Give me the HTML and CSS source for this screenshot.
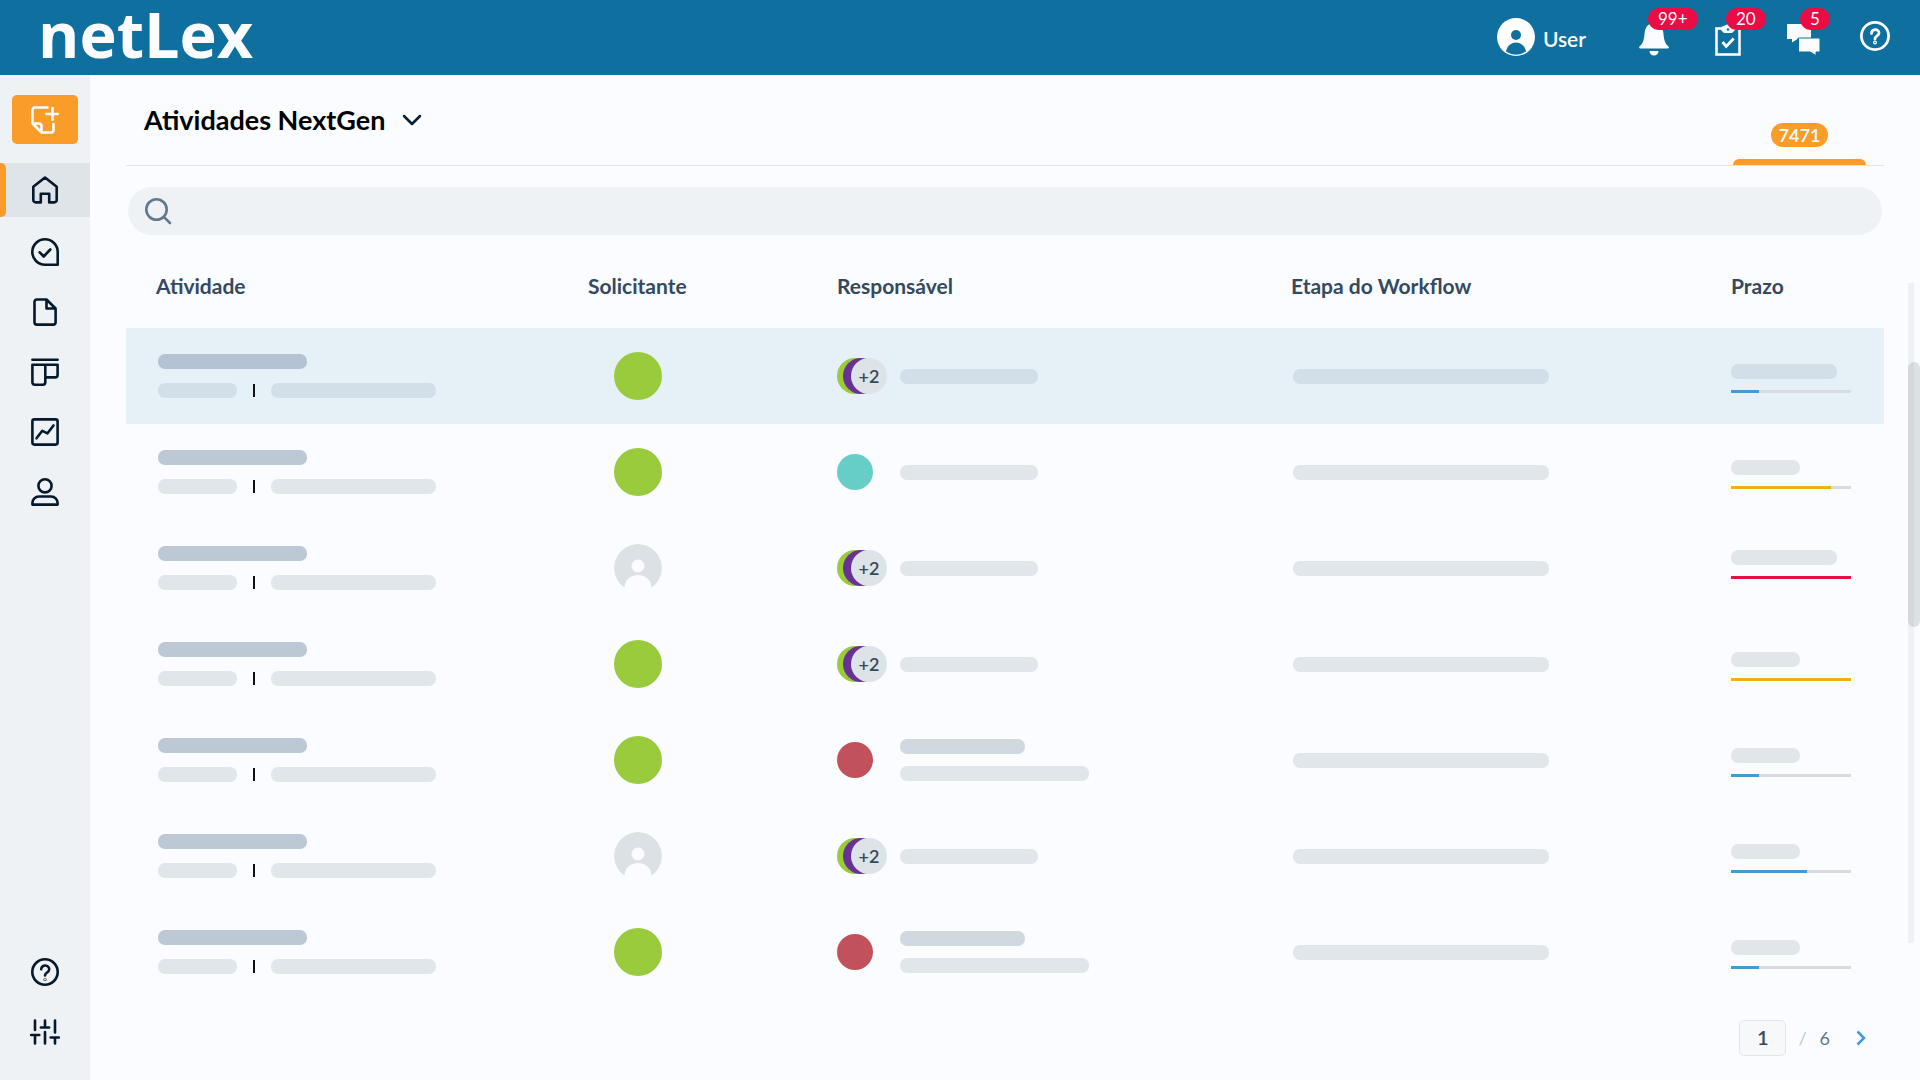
FILE: index.html
```html
<!DOCTYPE html>
<html lang="pt-BR">
<head>
<meta charset="utf-8">
<meta name="viewport" content="width=device-width, initial-scale=1">
<title>netLex</title>
<link rel="stylesheet" href="styles.css">
</head>
<body>
<svg class="defs" aria-hidden="true">
  <symbol id="empty-avatar" viewBox="0 0 48 48">
    <path fill="#dce1e5" fill-rule="evenodd" d="M24 0a24 24 0 0 1 13.500 43.800C37.500 36 31.500 31 24 31S10.500 36 10.500 43.800A24 24 0 0 1 24 0ZM24 15.500a6.500 6.500 0 1 0 0 13 6.500 6.500 0 0 0 0-13Z"/>
  </symbol>
</svg>

<header class="topbar">
  <a class="logo" href="#">netLex</a>
  <div class="topbar-actions">
    <button class="user" type="button">
      <svg width="38" height="38" viewBox="0 0 38 38" aria-hidden="true"><circle cx="19" cy="19" r="19" fill="#fff"/><circle cx="19" cy="17" r="5" fill="#0f6f9f"/><path d="M9 33.500c1-5.500 5-9 10-9s9 3.500 10 9a17.500 17.500 0 0 1-20 0Z" fill="#0f6f9f"/></svg>
      <span>User</span>
    </button>
    <button class="action" type="button" aria-label="Notificações">
      <svg width="32" height="40" viewBox="0 0 32 40" fill="#fafcff" aria-hidden="true"><path d="M16 6c-6.500 0-9 5-9.500 11-.5 7-2 10-5 12.500-.7.600-.3 2 .8 2h27.400c1.100 0 1.500-1.400.8-2-3-2.500-4.500-5.500-5-12.500C25 11 22.500 6 16 6ZM11.500 34h9c0 2.800-2 4.500-4.500 4.500s-4.500-1.700-4.500-4.500Z"/></svg>
      <span class="badge badge-bell">99+</span>
    </button>
    <button class="action" type="button" aria-label="Tarefas">
      <svg width="32" height="40" viewBox="0 0 32 40" aria-hidden="true"><rect x="4.500" y="11.500" width="23" height="26" fill="none" stroke="#fafcff" stroke-width="2.600"/><path d="M9 10l4-1.500c1-1.500 5-1.500 6 0l4 1.500v3l-3 3h-8l-3-3Z" fill="#fafcff"/><circle cx="16" cy="12.500" r="1.200" fill="#0f6f9f"/><path d="M10.500 25l3.700 4.500 7.500-8" fill="none" stroke="#fafcff" stroke-width="2.800"/></svg>
      <span class="badge">20</span>
    </button>
    <button class="action" type="button" aria-label="Mensagens">
      <svg width="34" height="40" viewBox="0 0 34 40" fill="#fafcff" aria-hidden="true"><path d="M1 7h24v14h-13.500v1L6 25.500V22H1Z"/><path d="M12.500 21H34v14h-4v3.500L24 35H12.500Z" stroke="#0f6f9f"/></svg>
      <span class="badge">5</span>
    </button>
    <button class="action" type="button" aria-label="Ajuda">
      <svg width="30" height="40" viewBox="0 0 30 40" fill="none" stroke="#fafcff" stroke-width="2.800" stroke-linecap="round" aria-hidden="true"><circle cx="15" cy="19" r="13.600"/><path d="M11.500 16.500c0-5 7.500-5 7.500-.5 0 3-4 2.800-4 6"/><circle cx="15" cy="25.500" r=".6"/></svg>
    </button>
  </div>
</header>

<div class="shell">
  <aside class="sidebar">
    <button class="create" type="button" aria-label="Nova atividade">
      <svg width="28" height="28" viewBox="0 0 28 28" fill="none" stroke="#fafcff" stroke-width="2.600" stroke-linecap="round" stroke-linejoin="round" aria-hidden="true"><path d="M16.500 1.500H4A2.500 2.500 0 0 0 1.500 4v13.500l9 9h9.500a2.500 2.500 0 0 0 2.500-2.500v-6M1.500 17.500H8a2.500 2.500 0 0 1 2.500 2.500v6.500M21.500 2v12M15.500 8h11.200"/></svg>
    </button>
    <nav class="nav" aria-label="Principal">
      <a class="nav-home" href="#" aria-label="Início" aria-current="page">
        <svg class="icon" viewBox="0 0 28 28" aria-hidden="true"><path d="M14 1.500L2.300 10.800V24A2.400 2.400 0 0 0 4.700 26.400H9.800V17.700H18.200V26.400H23.300A2.400 2.400 0 0 0 25.700 24V10.800Z"/></svg>
      </a>
      <div class="nav-list">
        <a class="nav-link" href="#" aria-label="Tarefas"><svg class="icon" viewBox="0 0 28 28" aria-hidden="true"><path d="M14 1.300A12.700 12.700 0 0 0 14 26.700H26.700V14A12.700 12.700 0 0 0 14 1.300ZM8.700 14.300l4 4.200 6.600-7"/></svg></a>
        <a class="nav-link" href="#" aria-label="Documentos"><svg class="icon" viewBox="0 0 28 28" aria-hidden="true"><path d="M15.500 1.500H5.900A2.400 2.400 0 0 0 3.500 3.900V24.200a2.400 2.400 0 0 0 2.400 2.400H22.200A2.400 2.400 0 0 0 24.600 24.200V10.500ZM15.500 1.500V10.500H24.600"/></svg></a>
        <a class="nav-link" href="#" aria-label="Quadro"><svg class="icon" viewBox="0 0 28 28" aria-hidden="true"><path d="M1.400 1.800H26.600M1.400 6.700H26.600V17a2.400 2.400 0 0 1-2.400 2.400H14.300M14.300 6.700V24.300a2.400 2.400 0 0 1-2.400 2.400H3.800A2.400 2.400 0 0 1 1.400 24.300V6.700"/></svg></a>
        <a class="nav-link" href="#" aria-label="Relatórios"><svg class="icon" viewBox="0 0 28 28" aria-hidden="true"><rect x="1.400" y="1.400" width="25.200" height="25.200" rx="2"/><path d="M5.500 20.300L11.300 12.800L16.500 15.300L22.500 7.500"/></svg></a>
        <a class="nav-link" href="#" aria-label="Perfil"><svg class="icon" viewBox="0 0 28 28" aria-hidden="true"><circle cx="14" cy="7.800" r="6.600"/><path d="M1.400 26.600V25A6.500 6.500 0 0 1 7.900 18.500H20.100A6.500 6.500 0 0 1 26.600 25V26.600Z"/></svg></a>
      </div>
      <div class="nav-footer">
        <a class="nav-link" href="#" aria-label="Ajuda"><svg class="icon" viewBox="0 0 28 28" aria-hidden="true"><circle cx="14" cy="14" r="12.700"/><path d="M10.200 11.300c.2-5.300 8.300-4.800 8 .2-.2 3-4.200 3-4.200 6"/><circle cx="14" cy="21.500" r=".3"/></svg></a>
        <a class="nav-link" href="#" aria-label="Configurações"><svg class="icon" viewBox="0 0 28 28" aria-hidden="true"><path d="M4 2.500V12M4 17V25.500M.2 17H8.300M14 2.500V9.500M9.900 9.500H18.100M14 14V25.500M24 2.500V14.500M24 19.500V25.500M19.700 19.500H27.800"/></svg></a>
      </div>
    </nav>
  </aside>

  <main class="main">
    <div class="page-head">
      <h1 class="page-title">
        <button class="title-button" type="button">Atividades NextGen
          <svg width="20" height="12" viewBox="0 0 20 12" fill="none" stroke="#04203a" stroke-width="2.500" stroke-linecap="round" stroke-linejoin="round" aria-hidden="true"><path d="M2 2l8 8 8-8"/></svg>
        </button>
      </h1>
      <a class="tab" href="#"><span class="tab-count">7471</span></a>
    </div>

    <label class="search">
      <svg width="28" height="28" viewBox="0 0 28 28" fill="none" stroke="#61788f" stroke-width="2.600" stroke-linecap="round" aria-hidden="true"><circle cx="12.500" cy="12.500" r="10.200"/><path d="M19.800 19.800L26 26"/></svg>
      <input class="search-input" type="search" aria-label="Pesquisar">
    </label>

    <div class="list">
      <table class="table">
        <colgroup><col class="col-activity"><col class="col-requester"><col class="col-owner"><col class="col-stage"><col class="col-due"></colgroup>
        <thead>
          <tr><th scope="col">Atividade</th><th scope="col">Solicitante</th><th scope="col">Responsável</th><th scope="col">Etapa do Workflow</th><th scope="col">Prazo</th></tr>
        </thead>
        <tbody>
          <tr class="selected">
            <td><div class="activity"><span class="bar bar-title"></span><div class="meta"><span class="bar bar-code"></span><span class="sep"></span><span class="bar bar-text"></span></div></div></td>
            <td><span class="avatar avatar-green"></span></td>
            <td><div class="owner"><div class="stack"><span class="dot dot-green"></span><span class="dot dot-purple"></span><span class="dot dot-more">+2</span></div><span class="bar bar-owner"></span></div></td>
            <td><span class="bar bar-stage"></span></td>
            <td><div class="due"><span class="bar bar-long"></span><div class="track"><div class="fill fill-blue" style="width:23%"></div></div></div></td>
          </tr>
          <tr>
            <td><div class="activity"><span class="bar bar-title"></span><div class="meta"><span class="bar bar-code"></span><span class="sep"></span><span class="bar bar-text"></span></div></div></td>
            <td><span class="avatar avatar-green"></span></td>
            <td><div class="owner"><div class="stack"><span class="dot dot-teal"></span></div><span class="bar bar-owner"></span></div></td>
            <td><span class="bar bar-stage"></span></td>
            <td><div class="due"><span class="bar bar-short"></span><div class="track"><div class="fill fill-yellow" style="width:83%"></div></div></div></td>
          </tr>
          <tr>
            <td><div class="activity"><span class="bar bar-title"></span><div class="meta"><span class="bar bar-code"></span><span class="sep"></span><span class="bar bar-text"></span></div></div></td>
            <td><svg class="avatar" aria-hidden="true"><use href="#empty-avatar"/></svg></td>
            <td><div class="owner"><div class="stack"><span class="dot dot-green"></span><span class="dot dot-purple"></span><span class="dot dot-more">+2</span></div><span class="bar bar-owner"></span></div></td>
            <td><span class="bar bar-stage"></span></td>
            <td><div class="due due-late"><span class="bar bar-long"></span><div class="track"><div class="fill fill-red" style="width:100%"></div></div></div></td>
          </tr>
          <tr>
            <td><div class="activity"><span class="bar bar-title"></span><div class="meta"><span class="bar bar-code"></span><span class="sep"></span><span class="bar bar-text"></span></div></div></td>
            <td><span class="avatar avatar-green"></span></td>
            <td><div class="owner"><div class="stack"><span class="dot dot-green"></span><span class="dot dot-purple"></span><span class="dot dot-more">+2</span></div><span class="bar bar-owner"></span></div></td>
            <td><span class="bar bar-stage"></span></td>
            <td><div class="due"><span class="bar bar-short"></span><div class="track"><div class="fill fill-yellow" style="width:100%"></div></div></div></td>
          </tr>
          <tr>
            <td><div class="activity"><span class="bar bar-title"></span><div class="meta"><span class="bar bar-code"></span><span class="sep"></span><span class="bar bar-text"></span></div></div></td>
            <td><span class="avatar avatar-green"></span></td>
            <td><div class="owner"><div class="stack"><span class="dot dot-red"></span></div><div class="owner-lines"><span class="bar bar-name"></span><span class="bar bar-team"></span></div></div></td>
            <td><span class="bar bar-stage"></span></td>
            <td><div class="due"><span class="bar bar-short"></span><div class="track"><div class="fill fill-blue" style="width:23%"></div></div></div></td>
          </tr>
          <tr>
            <td><div class="activity"><span class="bar bar-title"></span><div class="meta"><span class="bar bar-code"></span><span class="sep"></span><span class="bar bar-text"></span></div></div></td>
            <td><svg class="avatar" aria-hidden="true"><use href="#empty-avatar"/></svg></td>
            <td><div class="owner"><div class="stack"><span class="dot dot-green"></span><span class="dot dot-purple"></span><span class="dot dot-more">+2</span></div><span class="bar bar-owner"></span></div></td>
            <td><span class="bar bar-stage"></span></td>
            <td><div class="due"><span class="bar bar-short"></span><div class="track"><div class="fill fill-blue" style="width:63%"></div></div></div></td>
          </tr>
          <tr>
            <td><div class="activity"><span class="bar bar-title"></span><div class="meta"><span class="bar bar-code"></span><span class="sep"></span><span class="bar bar-text"></span></div></div></td>
            <td><span class="avatar avatar-green"></span></td>
            <td><div class="owner"><div class="stack"><span class="dot dot-red"></span></div><div class="owner-lines"><span class="bar bar-name"></span><span class="bar bar-team"></span></div></div></td>
            <td><span class="bar bar-stage"></span></td>
            <td><div class="due"><span class="bar bar-short"></span><div class="track"><div class="fill fill-blue" style="width:23%"></div></div></div></td>
          </tr>
        </tbody>
      </table>
      <div class="scroll"><div class="scroll-thumb"></div></div>
    </div>

    <nav class="pager" aria-label="Paginação">
      <input class="pager-input" type="text" value="1" aria-label="Página">
      <span class="pager-slash">/</span>
      <span class="pager-total">6</span>
      <button class="pager-next" type="button" aria-label="Próxima página"><svg width="10" height="16" viewBox="0 0 10 16" fill="none" stroke="#4499d4" stroke-width="2.500" aria-hidden="true"><path d="M1.500 1.500L8 8l-6.500 6.500"/></svg></button>
    </nav>
  </main>
</div>
</body>
</html>
```
FILE: styles.css
```css
* { box-sizing: border-box; }

body {
  margin: 0;
  min-height: 100vh;
  display: flex;
  flex-direction: column;
  background: #fafcff;
  color: #34495e;
  font-family: Lato, "Open Sans", sans-serif;
}

button {
  padding: 0;
  border: 0;
  background: none;
  color: inherit;
  font: inherit;
  cursor: pointer;
}

svg { display: block; }

.defs { position: absolute; width: 0; height: 0; }

/* Top bar */
.topbar {
  display: flex;
  justify-content: space-between;
  height: 75px;
  padding: 0 30px 0 38px;
  background: #0f6f9f;
  color: #fafcff;
}

.logo {
  color: #fafcff;
  font-family: "Open Sans", Lato, sans-serif;
  font-size: 63px;
  font-weight: 700;
  line-height: 68px;
  text-decoration: none;
}

.topbar-actions {
  display: flex;
  gap: 42px;
  height: 74px;
}

.user {
  display: flex;
  align-items: center;
  gap: 8px;
  margin-right: 10px;
  font-size: 21px;
  font-weight: 600;
}

.user span { padding-top: 3px; }

.action {
  position: relative;
  display: flex;
  align-items: center;
  width: 32px;
}

.action:last-child { width: 30px; }
.action svg { flex: none; }

.badge {
  position: absolute;
  top: 8px;
  left: 14px;
  min-width: 30px;
  height: 22px;
  padding: 0 10px;
  border-radius: 11px;
  background: #eb0b45;
  font-size: 17px;
  line-height: 22px;
}

.badge-bell { left: 10px; }

/* Sidebar */
.shell { display: flex; flex: 1; }

.sidebar {
  display: flex;
  flex-direction: column;
  flex: none;
  width: 90px;
  padding: 20px 0 18px;
  background: #eef2f5;
}

.create {
  display: grid;
  place-items: center;
  height: 49px;
  margin: 0 12px 19px;
  border-radius: 5px;
  background: #f99d28;
}

.nav {
  display: flex;
  flex-direction: column;
  flex: 1;
}

.nav-home {
  position: relative;
  display: grid;
  place-items: center;
  height: 54px;
  background: #dfe4e8;
}

.nav-home::before {
  content: "";
  position: absolute;
  inset: 0 auto 0 0;
  width: 6px;
  border-radius: 0 5px 5px 0;
  background: #f99d28;
}

.nav-list { margin-top: 5px; }
.nav-footer { margin-top: auto; }

.nav-link {
  display: grid;
  place-items: center;
  height: 60px;
}

.icon {
  width: 28px;
  height: 28px;
  overflow: visible;
  fill: none;
  stroke: #04192b;
  stroke-width: 2.6px;
  stroke-linecap: round;
  stroke-linejoin: round;
}

/* Main area */
.main {
  flex: 1;
  min-width: 0;
  padding-left: 36px;
}

.page-head {
  display: flex;
  justify-content: space-between;
  align-items: flex-start;
  height: 91px;
  margin-right: 36px;
  border-bottom: 1px solid #dfe4e8;
}

.page-title { margin: 0; font-size: 27px; line-height: 32px; }

.title-button {
  display: flex;
  align-items: center;
  gap: 17px;
  margin: 29px 0 0 18px;
  color: #000;
  font-weight: 700;
}

.tab {
  display: flex;
  justify-content: center;
  align-items: flex-end;
  align-self: stretch;
  position: relative;
  width: 133px;
  margin-right: 18px;
  padding-bottom: 18px;
  text-decoration: none;
}

.tab::after {
  content: "";
  position: absolute;
  inset: auto 0 0 0;
  height: 6px;
  border-radius: 6px 6px 0 0;
  background: #f99d28;
}

.tab-count {
  padding: 0 8px;
  border-radius: 12px;
  background: #f99d28;
  color: #fafcff;
  font-size: 18px;
  font-weight: 600;
  line-height: 24px;
}

.search {
  display: flex;
  align-items: center;
  gap: 12px;
  height: 48px;
  margin: 21px 38px 11px 2px;
  padding: 0 16px;
  border-radius: 24px;
  background: #eef2f5;
}

.search-input {
  flex: 1;
  border: 0;
  outline: 0;
  background: none;
  color: inherit;
  font: inherit;
  font-size: 18px;
}

/* Table */
.list { display: flex; gap: 24px; }

.table {
  flex: 1;
  width: 100%;
  border-collapse: collapse;
  table-layout: fixed;
}

.col-activity { width: 432px; }
.col-requester { width: 249px; }
.col-owner { width: 454px; }
.col-stage { width: 440px; }
.col-due { width: 183px; }

.table th {
  height: 82px;
  padding: 0 0 3px 30px;
  font-size: 21px;
  font-weight: 700;
  text-align: left;
}

.table td { height: 96px; padding: 0 0 0 30px; }
.table td:nth-child(1), .table td:nth-child(4) { padding-left: 32px; }
.table td:nth-child(2) { padding-left: 56px; }
.selected { background: #e5f1f7; }

.bar {
  display: block;
  flex: none;
  height: 15px;
  border-radius: 7px;
  background: #e0e6ea;
}

.selected .bar { background: #d3dfe8; }
.bar-title { width: 149px; background: #bcc8d4; }
.selected .bar-title { background: #b3c3d3; }
.bar-code { width: 79px; }
.bar-text { width: 165px; }
.bar-owner { width: 138px; }
.bar-name { width: 125px; background: #d0d8e0; }
.bar-team { width: 189px; }
.bar-stage { width: 256px; }
.bar-long { width: 106px; }
.bar-short { width: 69px; }

.activity { display: grid; gap: 14px; }
.meta { display: flex; align-items: center; gap: 16px; }
.sep { width: 2px; height: 13px; background: #111; }

.avatar {
  display: block;
  width: 48px;
  height: 48px;
  border-radius: 50%;
}

.avatar-green { background: #99cb3d; }

.owner { display: flex; align-items: center; }
.owner-lines { display: grid; gap: 12px; }

.stack { display: flex; flex: none; width: 63px; }

.dot {
  flex: none;
  width: 36px;
  height: 36px;
  border-radius: 50%;
}

.dot-green { background: #99cb3d; }
.dot-purple { margin-left: -30px; background: #683295; }
.dot-more {
  margin-left: -28px;
  background: #dee3e8;
  font-size: 18px;
  font-weight: 600;
  line-height: 36px;
  text-align: center;
}
.dot-teal { background: #67cec7; }
.dot-red { background: #c1515b; }

.due { display: grid; gap: 11px; padding-top: 4px; }
.due-late { padding: 0 0 7px; }
.track { width: 120px; height: 3px; background: #d9dcde; }
.fill { height: 100%; }
.fill-blue { background: #4499d4; }
.fill-yellow { background: #f0b010; }
.fill-red { background: #eb0b45; }

.scroll {
  flex: none;
  width: 12px;
  margin: 37px 0 57px;
  padding-top: 79px;
  background: linear-gradient(#eef2f5, #eef2f5) left / 6px 100% no-repeat;
}

.scroll-thumb {
  height: 265px;
  border-radius: 6px;
  background: linear-gradient(90deg, #d3d8dd 50%, #dce1e5 50%);
}

/* Pagination */
.pager {
  display: flex;
  align-items: center;
  justify-content: flex-end;
  height: 36px;
  margin: 20px 54px 24px 0;
}

.pager-input {
  width: 47px;
  height: 36px;
  padding: 0 0 2px;
  border: 1px solid #e3e6e9;
  border-radius: 5px;
  background: #f6f8fa;
  color: #34495e;
  font: 600 20px Lato, sans-serif;
  text-align: center;
}

.pager-slash, .pager-total { color: #61788f; font-size: 18px; }
.pager-slash { margin: 0 13px 0 12px; color: #bcc8d4; }
.pager-next { margin-left: 26px; }
```
